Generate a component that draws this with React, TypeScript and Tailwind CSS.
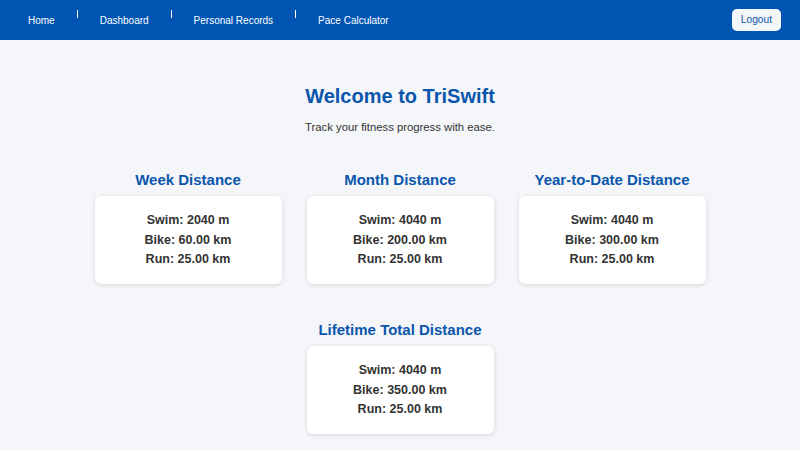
const NAV_LINKS = ["Home", "Dashboard", "Personal Records", "Pace Calculator"];

interface DistanceStats {
  title: string;
  swim: string;
  bike: string;
  run: string;
}

const TOP_ROW: DistanceStats[] = [
  { title: "Week Distance", swim: "2040 m", bike: "60.00 km", run: "25.00 km" },
  { title: "Month Distance", swim: "4040 m", bike: "200.00 km", run: "25.00 km" },
  { title: "Year-to-Date Distance", swim: "4040 m", bike: "300.00 km", run: "25.00 km" },
];

const LIFETIME: DistanceStats = {
  title: "Lifetime Total Distance",
  swim: "4040 m",
  bike: "350.00 km",
  run: "25.00 km",
};

function StatCard({ stats }: { stats: DistanceStats }) {
  return (
    <div className="w-[187px] flex flex-col items-center">
      <h2 className="text-[15px] leading-[18px] font-bold text-[#0b56ad] mb-[7px] whitespace-nowrap">
        {stats.title}
      </h2>
      <div className="w-full h-[88px] bg-white rounded-md shadow-[0_1px_5px_rgba(0,0,0,0.13)] pt-[15px] flex flex-col items-center text-[12.5px] leading-[19.5px] font-bold text-[#333]">
        <p>Swim: {stats.swim}</p>
        <p>Bike: {stats.bike}</p>
        <p>Run: {stats.run}</p>
      </div>
    </div>
  );
}

export default function App() {
  return (
    <div
      className="w-[800px] h-[450px] overflow-hidden bg-[#f4f6f9] flex flex-col"
      style={{ fontFamily: '"Liberation Sans", Arial, sans-serif' }}
    >
      {/* Top nav */}
      <nav className="h-10 shrink-0 bg-[#0055b3] flex items-center justify-between pl-7 pr-[19px]">
        <ul className="flex items-stretch h-full">
          {NAV_LINKS.map((label, i) => (
            <li key={label} className="flex items-stretch">
              {i > 0 && <span className="w-px h-[8px] bg-white mt-[10px] mx-[22px]" />}
              <a className="self-center pt-[1px] text-[10px] text-white">{label}</a>
            </li>
          ))}
        </ul>
        <button
          type="button"
          className="h-[22px] px-[9px] rounded-[5px] bg-[#f4f6fa] text-[10.2px] text-[#0b56ad]"
        >
          Logout
        </button>
      </nav>

      {/* Main */}
      <main className="flex flex-col items-center pt-[44px]">
        <h1 className="text-[20px] leading-6 font-bold text-[#0b56ad]">Welcome to TriSwift</h1>
        <p className="mt-[13px] text-[11.3px] leading-[13px] text-[#333]">
          Track your fitness progress with ease.
        </p>

        <div className="mt-[37px] flex gap-[25px]">
          {TOP_ROW.map((s) => (
            <StatCard key={s.title} stats={s} />
          ))}
        </div>

        <div className="mt-[37px]">
          <StatCard stats={LIFETIME} />
        </div>
      </main>
    </div>
  );
}
